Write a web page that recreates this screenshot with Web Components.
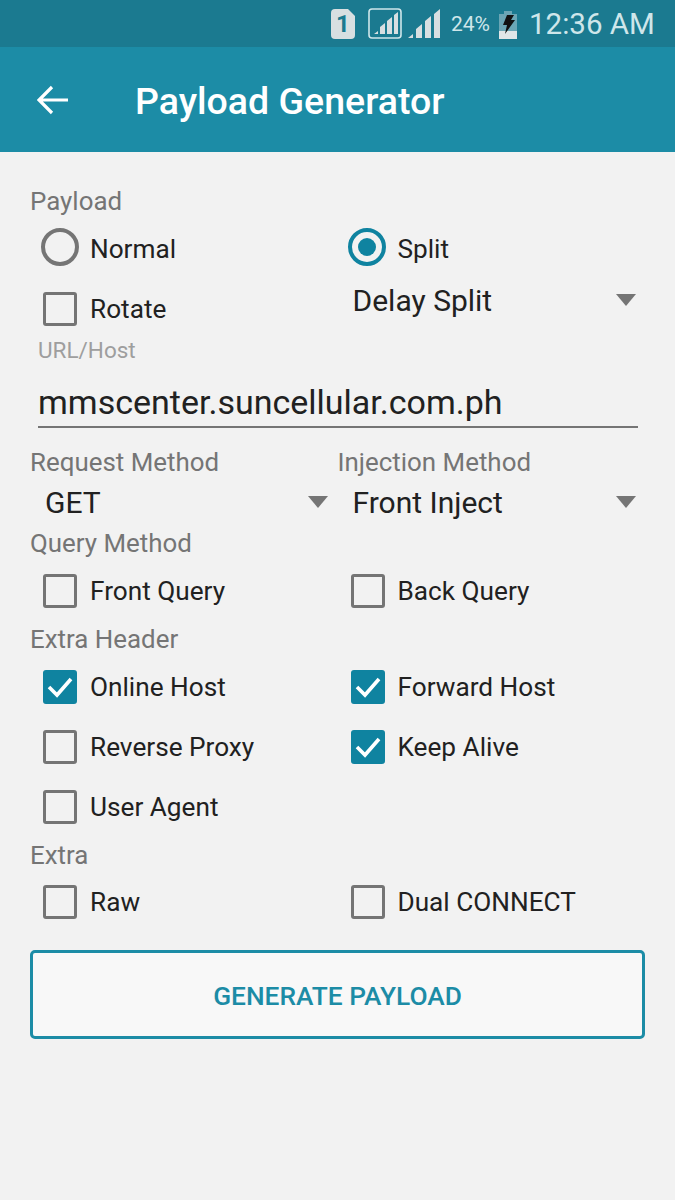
<!DOCTYPE html>
<html>
<head>
<meta charset="utf-8">
<title>Payload Generator</title>
<style>
  html, body { margin: 0; background: #f2f2f2; }
  body { font-family: Roboto, "Noto Sans", sans-serif; width: 675px; height: 1200px; overflow: hidden; }
</style>
</head>
<body>
<status-bar></status-bar>
<app-bar title="Payload Generator"></app-bar>
<payload-form>
  <form-section label="Payload">
    <radio-option label="Normal"></radio-option>
    <radio-option label="Split" checked></radio-option>
    <check-option label="Rotate"></check-option>
    <drop-down value="Delay Split" class="raised"></drop-down>
  </form-section>
  <text-field label="URL/Host" value="mmscenter.suncellular.com.ph"></text-field>
  <form-section>
    <drop-down label="Request Method" value="GET"></drop-down>
    <drop-down label="Injection Method" value="Front Inject"></drop-down>
  </form-section>
  <form-section label="Query Method">
    <check-option label="Front Query"></check-option>
    <check-option label="Back Query"></check-option>
  </form-section>
  <form-section label="Extra Header">
    <check-option label="Online Host" checked></check-option>
    <check-option label="Forward Host" checked></check-option>
    <check-option label="Reverse Proxy"></check-option>
    <check-option label="Keep Alive" checked></check-option>
    <check-option label="User Agent"></check-option>
  </form-section>
  <form-section label="Extra" tight>
    <check-option label="Raw"></check-option>
    <check-option label="Dual CONNECT"></check-option>
  </form-section>
  <outline-button label="GENERATE PAYLOAD"></outline-button>
</payload-form>

<script>
  // small helper, every element just sets its markup in an open shadow root
  function shadow(el, html) {
    el.attachShadow({ mode: "open" }).innerHTML = html;
  }

  class StatusBar extends HTMLElement {
    connectedCallback() {
      shadow(this, `<style>
        :host { display: flex; align-items: center; height: 47px; background: #1b7a90; color: #cfe6ea;
          font-family: Roboto, sans-serif; box-sizing: border-box; padding-left: 331px; }
        svg { display: block; flex: none; }
        .sim { position: relative; width: 24px; height: 30px; margin-right: 13px; }
        .sim b { position: absolute; inset: 0; text-align: center; font: 700 24px/31px Roboto, sans-serif; color: #1b7a90; }
        .pct { font-size: 21px; margin-left: 11px; width: 48px; }
        .time { font-size: 29.5px; margin-left: 12px; white-space: nowrap; }
      </style>
      <div class="sim">
        <svg width="24" height="30" viewBox="0 0 24 30"><path d="M4 0h13l7 7v19a4 4 0 0 1-4 4H4a4 4 0 0 1-4-4V4a4 4 0 0 1 4-4z" fill="#d8dfe1"/></svg>
        <b>1</b>
      </div>
      <svg width="34" height="31" viewBox="0 0 34 31" style="margin-right:6px">
        <rect x="1" y="1" width="32" height="29" rx="3" fill="none" stroke="#cfe6ea" stroke-width="1.6"/>
        <path d="M6 26l4-3v3zM12 26v-7l5-4v11zM19 26V13l5-4v17zM26 26V7l4-3v22z" fill="#d8dfe1"/>
      </svg>
      <svg width="32" height="30" viewBox="0 0 32 30">
        <path d="M0 29l5-4v4zM8 29V20l6-5v14zM17 29V12l6-5v22zM26 29V5l6-5v29z" fill="#d8dfe1"/>
      </svg>
      <span class="pct">24%</span>
      <svg width="18" height="30" viewBox="0 0 18 30">
        <path d="M5 2h8v3h5v25H0V5h5z" fill="#6ba6b5"/>
        <rect y="22" width="18" height="8" fill="#e0e6e8"/>
        <path d="M8 6h7l-3 5h4L6 25l2-9H4z" fill="#111"/>
      </svg>
      <span class="time">12:36 AM</span>`);
    }
  }

  class AppBar extends HTMLElement {
    connectedCallback() {
      shadow(this, `<style>
        :host { display: flex; align-items: center; height: 105px; background: #1c8ca6; color: #fff; }
        svg { margin-left: 37px; flex: none; }
        h1 { margin: 3px 0 0 66px; font: 500 37.5px Roboto, sans-serif; }
      </style>
      <svg width="32" height="30" viewBox="0 0 32 30" fill="none" stroke="#fff" stroke-width="3.2">
        <path d="M31 15H3M15 2L2 15l13 13"/>
      </svg>
      <h1>${this.getAttribute("title")}</h1>`);
    }
  }

  class PayloadForm extends HTMLElement {
    connectedCallback() {
      shadow(this, `<style>
        :host { display: flex; flex-direction: column; gap: 3px; padding: 34px 30px 0; }
      </style><slot></slot>`);
    }
  }

  class FormSection extends HTMLElement {
    connectedCallback() {
      var label = this.getAttribute("label");
      shadow(this, `<style>
        :host { display: flex; flex-direction: column; gap: 3px; }
        :host([tight]) { gap: 2px; }
        .label { height: 30px; font-size: 25.9px; line-height: 30px; color: #757575; }
        .grid { display: grid; grid-template-columns: 307.5px 1fr; }
      </style>
      ${label ? '<div class="label">' + label + "</div>" : ""}
      <div class="grid"><slot></slot></div>`);
    }
  }

  class CheckOption extends HTMLElement {
    connectedCallback() {
      var on = this.hasAttribute("checked");
      shadow(this, `<style>
        :host { display: flex; align-items: center; height: 60px; padding-left: 13px; }
        .box { width: 34px; height: 34px; box-sizing: border-box; border-radius: 3px; flex: none;
          border: 3px solid ${on ? "#0f83a0" : "#757575"}; background: ${on ? "#0f83a0" : "transparent"}; }
        svg { display: block; }
        span { margin-left: 13px; font-size: 26.2px; color: #212121; white-space: nowrap; }
      </style>
      <div class="box">${on ? '<svg width="28" height="28" viewBox="0 0 28 28" fill="none" stroke="#fff" stroke-width="3.6"><path d="M3 14l8 8L25 6"/></svg>' : ""}</div>
      <span>${this.getAttribute("label")}</span>`);
    }
  }

  class RadioOption extends HTMLElement {
    connectedCallback() {
      var on = this.hasAttribute("checked");
      shadow(this, `<style>
        :host { display: flex; align-items: center; height: 60px; padding-left: ${on ? 10 : 11}px; }
        .ring { width: 38px; height: 38px; box-sizing: border-box; border-radius: 50%; flex: none; margin-top: -4px;
          border: 4px solid ${on ? "#0f83a0" : "#757575"}; display: flex; align-items: center; justify-content: center; }
        .ring i { width: 18px; height: 18px; border-radius: 50%; background: #0f83a0; }
        span { margin-left: ${on ? 12 : 11}px; font-size: 26.2px; color: #212121; }
      </style>
      <div class="ring">${on ? "<i></i>" : ""}</div>
      <span>${this.getAttribute("label")}</span>`);
    }
  }

  class DropDown extends HTMLElement {
    connectedCallback() {
      var label = this.getAttribute("label");
      var raised = this.classList.contains("raised");
      shadow(this, `<style>
        :host { display: block; }
        .label { height: 30px; font-size: 25.9px; line-height: 30px; color: #757575; }
        .row { display: flex; align-items: center; justify-content: space-between; height: ${raised ? 42 : 50}px;
          margin-bottom: ${raised ? 0 : -2}px; padding-left: 15px; width: 283px; }
        .row span { font-size: 30px; color: #212121; }
        svg { flex: none; margin-top: -1px; }
      </style>
      ${label ? '<div class="label">' + label + "</div>" : ""}
      <div class="row"><span>${this.getAttribute("value")}</span>
        <svg width="20" height="12" viewBox="0 0 20 12"><path d="M0 0h20L10 12z" fill="#757575"/></svg>
      </div>`);
    }
  }

  class TextField extends HTMLElement {
    connectedCallback() {
      shadow(this, `<style>
        :host { display: block; padding-left: 8px; margin: -3px 0 16px; }
        .label { height: 22px; font-size: 22.5px; line-height: 22px; color: #9e9e9e; }
        .input { height: 67px; box-sizing: border-box; border-bottom: 2px solid #757575; width: 600px;
          font-size: 34px; line-height: 50px; padding-top: 16px; color: #212121; white-space: nowrap; }
      </style>
      <div class="label">${this.getAttribute("label")}</div>
      <div class="input">${this.getAttribute("value")}</div>`);
    }
  }

  class OutlineButton extends HTMLElement {
    connectedCallback() {
      shadow(this, `<style>
        :host { display: flex; align-items: center; justify-content: center; height: 89px; width: 615px;
          box-sizing: border-box; margin-top: 15px; padding-top: 2px; border: 3px solid #1c8ca6; border-radius: 5px;
          background: #f8f8f8; color: #1c8ca6; font-size: 26.3px; font-weight: 500; }
      </style>${this.getAttribute("label")}`);
    }
  }

  customElements.define("status-bar", StatusBar);
  customElements.define("app-bar", AppBar);
  customElements.define("payload-form", PayloadForm);
  customElements.define("form-section", FormSection);
  customElements.define("check-option", CheckOption);
  customElements.define("radio-option", RadioOption);
  customElements.define("drop-down", DropDown);
  customElements.define("text-field", TextField);
  customElements.define("outline-button", OutlineButton);
</script>
</body>
</html>
